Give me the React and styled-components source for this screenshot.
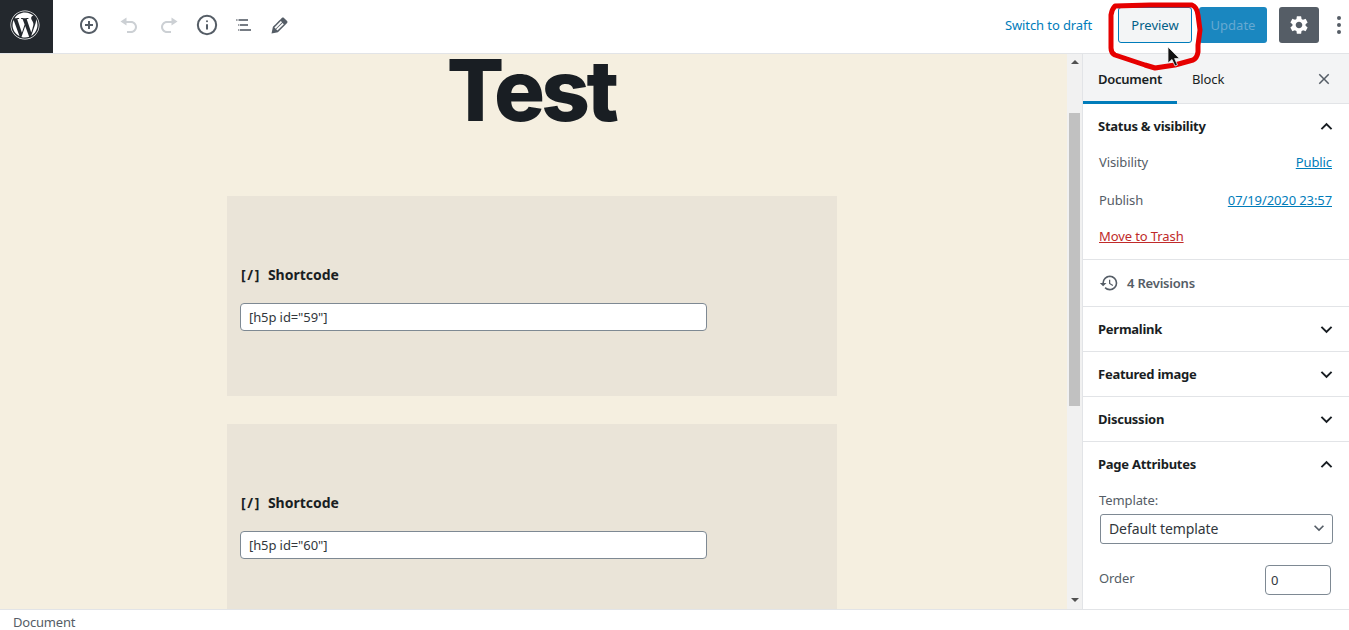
import styled, { createGlobalStyle } from "styled-components";
import { Info } from "lucide-react";
import { FaWordpress } from "react-icons/fa";
import { MdHistory, MdSettings, MdKeyboardArrowDown, MdKeyboardArrowUp, MdClose } from "react-icons/md";

const GlobalStyle = createGlobalStyle`
  html, body {
    margin: 0;
    height: 100%;
    overflow: hidden;
    background: #fff;
    font-family: "Noto Sans", sans-serif;
    font-size: 13px;
    letter-spacing: -0.1px;
    color: #191e23;
  }
`;

const Page = styled.div`
  position: relative;
  width: 1349px;
  height: 630px;
  display: flex;
  flex-direction: column;
  overflow: hidden;
`;

const Header = styled.header`
  height: 54px;
  box-sizing: border-box;
  padding-bottom: 3px;
  flex: none;
  display: flex;
  align-items: center;
  border-bottom: 1px solid #e2e4e7;
  background: #fff;
`;

const LogoBox = styled.div`
  width: 53px;
  height: 53px;
  box-sizing: border-box;
  padding: 0 3px 3px 0;
  align-self: flex-start;
  background: #23282d;
  color: #fff;
  display: flex;
  align-items: center;
  justify-content: center;
  font-size: 30px;
`;

const Tools = styled.div`
  display: flex;
  align-items: center;
  gap: 12px;
  margin-left: 22px;
  flex: 1;
`;

const ToolIcon = styled.span`
  width: ${(p) => p.$w || 24}px;
  height: 24px;
  display: flex;
  align-items: center;
  justify-content: center;
  color: ${(p) => (p.$off ? "#ccd0d4" : "#555d66")};
`;

const DraftLink = styled.a`
  color: #007cba;
  font-size: 13px;
  margin-right: 26px;
`;

const PreviewButton = styled.button`
  width: 74px;
  height: 36px;
  padding: 0;
  background: #f3f5f6;
  border: 1px solid #007cba;
  border-radius: 3px;
  color: #016087;
  font: 13px "Noto Sans", sans-serif;
  margin-right: 7px;
`;

const UpdateButton = styled.button`
  width: 68px;
  height: 36px;
  padding: 0;
  background: #1a87c0;
  border: 0;
  border-radius: 3px;
  color: #66a9d1;
  font: 13px "Noto Sans", sans-serif;
  margin-right: 12px;
`;

const GearButton = styled.div`
  width: 40px;
  height: 36px;
  border-radius: 3px;
  background: #555d66;
  color: #fff;
  display: flex;
  align-items: center;
  justify-content: center;
  font-size: 22px;
  margin-right: 15px;
`;

const Dots = styled.div`
  width: 10px;
  margin-right: 5px;
  display: flex;
  flex-direction: column;
  align-items: center;
  gap: 3px;
  i {
    width: 4px;
    height: 4px;
    border-radius: 50%;
    background: #555d66;
  }
`;

const Body = styled.div`
  flex: 1;
  min-height: 0;
  display: flex;
`;

const Editor = styled.main`
  width: 1067px;
  flex: none;
  background: #f5efe0;
  overflow: hidden;
  padding-right: 3px;
  box-sizing: border-box;
`;

const Title = styled.h1`
  margin: 0 0 57px;
  height: 85px;
  text-align: center;
  text-indent: -2px;
  font: 800 85px/74px Inter, sans-serif;
  letter-spacing: -3.6px;
  color: #191e23;
`;

const ShortcodeBlock = styled.section`
  width: 610px;
  height: 200px;
  margin: 0 auto 28px;
  background: #eae4d8;
  padding: 70px 13px 0;
  box-sizing: border-box;
`;

const BlockLabel = styled.div`
  display: flex;
  gap: 7px;
  padding-left: 1px;
  font-weight: 700;
  font-size: 14px;
  line-height: 18px;
  letter-spacing: 0;
  color: #191e23;
  margin-bottom: 19px;
`;

const BlockGlyph = styled.span`
  letter-spacing: 1.6px;
`;

const CodeInput = styled.div`
  width: 467px;
  height: 28px;
  box-sizing: border-box;
  background: #fff;
  border: 1px solid #7e8993;
  border-radius: 4px;
  padding: 0 8px;
  font-size: 13px;
  line-height: 26px;
  color: #32373c;
`;

const Scrollbar = styled.div`
  width: 15px;
  flex: none;
  background: #f1f1f1;
  display: flex;
  flex-direction: column;
  align-items: center;
  box-sizing: border-box;
`;

const ScrollArrow = styled.div`
  width: 0;
  height: 0;
  border-left: 4px solid transparent;
  border-right: 4px solid transparent;
  ${(p) => (p.$down ? "border-top: 4px solid #505050; margin-top: 192px;" : "border-bottom: 4px solid #505050; margin-top: 6px;")}
`;

const ScrollThumb = styled.div`
  width: 11px;
  height: 293px;
  margin-top: 49px;
  background: #c1c1c1;
`;

const Sidebar = styled.aside`
  flex: 1;
  min-width: 0;
  border-left: 1px solid #e2e4e7;
  overflow: hidden;
  background: #fff;
`;

const TabBar = styled.div`
  height: 49px;
  display: flex;
  align-items: stretch;
  background: #f3f4f5;
  border-bottom: 1px solid #e2e4e7;
  color: #191e23;
`;

const Tab = styled.div`
  padding: 0 15px;
  width: ${(p) => (p.$active ? "94px" : "auto")};
  display: flex;
  align-items: center;
  font-weight: ${(p) => (p.$active ? 600 : 400)};
  letter-spacing: ${(p) => (p.$active ? "-0.25px" : "-0.1px")};
  box-shadow: ${(p) => (p.$active ? "inset 0 -3px 0 #007cba" : "none")};
  height: 50px;
  box-sizing: border-box;
`;

const TabClose = styled.div`
  margin-left: auto;
  width: 50px;
  display: flex;
  align-items: center;
  justify-content: center;
  font-size: 18px;
  color: #555d66;
`;

const Panel = styled.section`
  border-bottom: 1px solid #e2e4e7;
  padding: 0 17px ${(p) => p.$pb || 0}px 15px;
`;

const PanelHead = styled.div`
  height: 44px;
  display: flex;
  align-items: center;
  justify-content: space-between;
  font-weight: 700;
  font-size: 13px;
  letter-spacing: -0.25px;
  color: #191e23;
  svg {
    font-size: 23px;
    margin-right: -6px;
  }
`;

const Row = styled.div`
  display: flex;
  justify-content: space-between;
  align-items: center;
  height: ${(p) => p.$h}px;
  color: #555d66;
  padding-left: 1px;
`;

const TextLink = styled.a`
  color: ${(p) => p.$color || "#007cba"};
  text-decoration: underline;
`;

const RevisionRow = styled.div`
  height: 46px;
  display: flex;
  align-items: center;
  gap: 8px;
  font-weight: 600;
  color: #555d66;
  padding-left: 1px;
  font-size: 13px;
  letter-spacing: -0.2px;
  svg {
    font-size: 20px;
  }
`;

const FieldLabel = styled.div`
  color: #555d66;
  padding-left: 1px;
  line-height: 18px;
  margin: 5px 0;
`;

const SelectBox = styled.div`
  width: 233px;
  height: 30px;
  margin-left: 2px;
  box-sizing: border-box;
  border: 1px solid #7e8993;
  border-radius: 3px;
  padding: 0 3px 2px 8px;
  display: flex;
  align-items: center;
  justify-content: space-between;
  font-size: 14px;
  color: #32373c;
  svg {
    font-size: 20px;
    color: #555d66;
  }
`;

const OrderRow = styled.div`
  display: flex;
  align-items: center;
  justify-content: space-between;
  color: #555d66;
  padding: 0 1px 0 1px;
  margin-top: 21px;
`;

const OrderLabel = styled.span`
  margin-bottom: 4px;
`;

const OrderInput = styled.div`
  width: 66px;
  height: 30px;
  box-sizing: border-box;
  border: 1px solid #7e8993;
  border-radius: 4px;
  padding: 0 5px;
  line-height: 29px;
  color: #32373c;
`;

const StatusBar = styled.footer`
  height: 20px;
  flex: none;
  border-top: 1px solid #e2e4e7;
  padding: 0 13px;
  font-size: 13px;
  letter-spacing: -0.2px;
  line-height: 25px;
  color: #555d66;
  background: #fff;
`;

const Annotation = styled.svg`
  position: absolute;
  left: 1100px;
  top: 0;
  pointer-events: none;
`;

function ListIcon() {
  return (
    <svg width="20" height="20" viewBox="0 0 20 20" fill="#555d66">
      <rect x="3" y="4.2" width="1.6" height="1.6" opacity="0.7" />
      <rect x="5.5" y="4.2" width="9.5" height="1.6" />
      <rect x="5" y="9.2" width="1.4" height="1.6" opacity="0.7" />
      <rect x="7" y="9.2" width="8" height="1.6" />
      <rect x="5" y="14.2" width="1.4" height="1.6" opacity="0.7" />
      <rect x="7" y="14.2" width="11" height="1.6" />
    </svg>
  );
}

function PlusCircle() {
  return (
    <svg width="20" height="20" viewBox="0 0 20 20" fill="#555d66">
      <path d="M10 1c-5 0-9 4-9 9s4 9 9 9 9-4 9-9-4-9-9-9zm0 16c-3.9 0-7-3.1-7-7s3.1-7 7-7 7 3.1 7 7-3.1 7-7 7zm1-11H9v3H6v2h3v3h2v-3h3V9h-3V6z" />
    </svg>
  );
}

function UndoIcon({ flip }) {
  return (
    <svg width="20" height="20" viewBox="0 0 20 20" fill="#ccd0d4" style={flip ? { transform: "scaleX(-1)" } : undefined}>
      <path d="M7.5 2.5 1.5 6.5l6 4V8H12c2.2 0 4 1.8 4 4s-1.8 4-4 4H8v2h4c3.3 0 6-2.7 6-6s-2.7-6-6-6H7.5z" />
    </svg>
  );
}

function PencilIcon() {
  return (
    <svg width="23" height="23" viewBox="0 0 20 20" fill="#555d66">
      <path d="M13.89 3.39l2.71 2.72c.46.46.42 1.24.03 1.64l-8.01 8.02-5.56 1.16 1.16-5.58s7.6-7.63 7.99-8.03c.39-.39 1.22-.39 1.68.07zm-2.73 2.79l-5.59 5.61 1.11 1.11 5.54-5.65zm-2.97 8.23l5.58-5.6-1.07-1.08-5.59 5.6z" />
    </svg>
  );
}

function Blocks({ id }) {
  return (
    <ShortcodeBlock>
      <BlockLabel>
        <BlockGlyph>[/]</BlockGlyph>
        <span>Shortcode</span>
      </BlockLabel>
      <CodeInput>[h5p id="{id}"]</CodeInput>
    </ShortcodeBlock>
  );
}

export default function App() {
  return (
    <Page>
      <GlobalStyle />
      <Header>
        <LogoBox>
          <FaWordpress />
        </LogoBox>
        <Tools>
          <ToolIcon $w={28}><PlusCircle /></ToolIcon>
          <ToolIcon $w={28} $off><UndoIcon /></ToolIcon>
          <ToolIcon $w={28} $off><UndoIcon flip /></ToolIcon>
          <ToolIcon><Info size={22} strokeWidth={2.2} /></ToolIcon>
          <ToolIcon><ListIcon /></ToolIcon>
          <ToolIcon><PencilIcon /></ToolIcon>
        </Tools>
        <DraftLink>Switch to draft</DraftLink>
        <PreviewButton>Preview</PreviewButton>
        <UpdateButton>Update</UpdateButton>
        <GearButton><MdSettings /></GearButton>
        <Dots><i /><i /><i /></Dots>
      </Header>
      <Body>
        <Editor>
          <Title>Test</Title>
          <Blocks id="59" />
          <Blocks id="60" />
        </Editor>
        <Scrollbar>
          <ScrollArrow />
          <ScrollThumb />
          <ScrollArrow $down />
        </Scrollbar>
        <Sidebar>
          <TabBar>
            <Tab $active>Document</Tab>
            <Tab>Block</Tab>
            <TabClose><MdClose /></TabClose>
          </TabBar>
          <Panel $pb={11}>
            <PanelHead>Status &amp; visibility <MdKeyboardArrowUp /></PanelHead>
            <Row $h={28}>Visibility <TextLink>Public</TextLink></Row>
            <Row $h={48}>Publish <TextLink>07/19/2020 23:57</TextLink></Row>
            <Row $h={24}><TextLink $color="#c02a2a">Move to Trash</TextLink></Row>
          </Panel>
          <Panel>
            <RevisionRow><MdHistory /> 4 Revisions</RevisionRow>
          </Panel>
          <Panel><PanelHead>Permalink <MdKeyboardArrowDown /></PanelHead></Panel>
          <Panel><PanelHead>Featured image <MdKeyboardArrowDown /></PanelHead></Panel>
          <Panel><PanelHead>Discussion <MdKeyboardArrowDown /></PanelHead></Panel>
          <Panel $pb={14}>
            <PanelHead>Page Attributes <MdKeyboardArrowUp /></PanelHead>
            <FieldLabel>Template:</FieldLabel>
            <SelectBox>Default template <MdKeyboardArrowDown /></SelectBox>
            <OrderRow><OrderLabel>Order</OrderLabel> <OrderInput>0</OrderInput></OrderRow>
          </Panel>
        </Sidebar>
      </Body>
      <StatusBar>Document</StatusBar>
      <Annotation width="110" height="75" viewBox="0 0 110 75">
        <path
          d="M15 6 L50 5 L92 5 Q97 7 98 15 L100 30 L98 45 L98 52 Q97 58 93 60 L75 65 L55 68 L45 65 L30 60 L15 55 Q11 53 11 48 L11 30 L11 15 Q12 9 15 6 Z"
          fill="none"
          stroke="#e60000"
          strokeWidth="5"
          strokeLinejoin="round"
        />
        <path d="M68 47 L68 63 L72 59.5 L75 66 L77.5 65 L74.6 58.6 L79.5 58.6 Z" fill="#111" stroke="#eee" strokeWidth="0.8" />
      </Annotation>
    </Page>
  );
}
